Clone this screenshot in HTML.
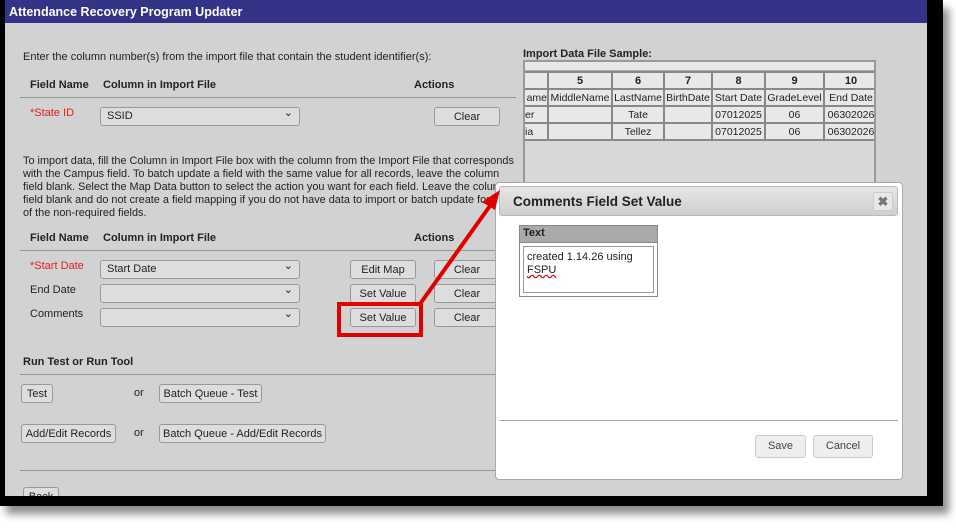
<!DOCTYPE html>
<html><head><style>
*{margin:0;padding:0;box-sizing:border-box}
body{width:956px;height:530px;background:#fff;position:relative;overflow:hidden;font-family:"Liberation Sans",Arial,sans-serif;font-size:11px;color:#222}
.a{position:absolute}
.frame{left:0;top:0;width:943px;height:506px;background:#000;box-shadow:6px 8px 8px rgba(0,0,0,.45)}
.page{left:5px;top:0;width:922px;height:496px;background:#d2d2d2;overflow:hidden}
.title{left:5px;top:0;width:922px;height:23px;background:#333388;color:#fff;font-weight:bold;font-size:12.5px;padding:5px 4px}
.b{font-weight:bold;font-size:11px}
.line{height:1px;background:#999}
.sel{height:19px;border:1px solid #999;border-radius:3px;background:#ddd;font-size:11px;padding:0 6px;line-height:17px}
.sel:after{content:"⌄";position:absolute;right:6px;top:-3px;font-size:11px}
.btn{height:19px;border:1px solid #999;border-radius:3px;background:#ddd;font-size:11px;text-align:center;line-height:18px}
.red{color:#e02020}
table{border-collapse:collapse;table-layout:fixed;width:354px}
td{border:2px solid #888;background:#e8e8e8;height:17px;text-align:center;font-size:10.5px;padding:0;white-space:nowrap;overflow:hidden}
</style></head><body>
<div class="a frame"></div>
<div class="a page"></div>
<div class="a title">Attendance Recovery Program Updater</div>

<div class="a" style="left:23px;top:51px">Enter the column number(s) from the import file that contain the student identifier(s):</div>
<div class="a b" style="left:30px;top:79px">Field Name</div>
<div class="a b" style="left:103px;top:79px">Column in Import File</div>
<div class="a b" style="left:414px;top:79px">Actions</div>
<div class="a line" style="left:20px;top:97px;width:496px"></div>
<div class="a red" style="left:30px;top:107px">*State ID</div>
<div class="a sel" style="left:100px;top:107px;width:200px">SSID</div>
<div class="a btn" style="left:434px;top:107px;width:66px">Clear</div>

<div class="a" style="left:23px;top:155px;width:497px;line-height:13px;font-size:10.9px">To import data, fill the Column in Import File box with the column from the Import File that corresponds with the Campus field. To batch update a field with the same value for all records, leave the column field blank. Select the Map Data button to select the action you want for each field. Leave the column field blank and do not create a field mapping if you do not have data to import or batch update for any of the non-required fields.</div>

<div class="a b" style="left:30px;top:232px">Field Name</div>
<div class="a b" style="left:103px;top:232px">Column in Import File</div>
<div class="a b" style="left:414px;top:232px">Actions</div>
<div class="a line" style="left:20px;top:250px;width:480px"></div>
<div class="a red" style="left:30px;top:260px">*Start Date</div>
<div class="a sel" style="left:100px;top:260px;width:200px">Start Date</div>
<div class="a btn" style="left:350px;top:260px;width:66px">Edit Map</div>
<div class="a btn" style="left:434px;top:260px;width:66px">Clear</div>
<div class="a" style="left:30px;top:284px">End Date</div>
<div class="a sel" style="left:100px;top:284px;width:200px"></div>
<div class="a btn" style="left:350px;top:284px;width:66px">Set Value</div>
<div class="a btn" style="left:434px;top:284px;width:66px">Clear</div>
<div class="a" style="left:30px;top:308px">Comments</div>
<div class="a sel" style="left:100px;top:308px;width:200px"></div>
<div class="a btn" style="left:350px;top:308px;width:66px">Set Value</div>
<div class="a btn" style="left:434px;top:308px;width:66px">Clear</div>
<div class="a" style="left:337px;top:302px;width:86px;height:35px;border:4px solid #e00000"></div>

<div class="a b" style="left:23px;top:356px">Run Test or Run Tool</div>
<div class="a line" style="left:20px;top:374px;width:480px"></div>
<div class="a btn" style="left:21px;top:384px;width:32px">Test</div>
<div class="a" style="left:134px;top:387px">or</div>
<div class="a btn" style="left:159px;top:384px;width:103px">Batch Queue - Test</div>
<div class="a btn" style="left:21px;top:424px;width:95px">Add/Edit Records</div>
<div class="a" style="left:134px;top:427px">or</div>
<div class="a btn" style="left:159px;top:424px;width:167px">Batch Queue - Add/Edit Records</div>
<div class="a line" style="left:20px;top:470px;width:480px"></div>
<div class="a btn" style="left:23px;top:487px;width:36px;height:19px">Back</div>
<div class="a" style="left:0;top:496px;width:943px;height:10px;background:#000"></div>

<div class="a b" style="left:523px;top:48px">Import Data File Sample:</div>
<div class="a" style="left:523px;top:60px;width:353px;height:125px;border:2px solid #999;background:#d8d8d8;overflow:hidden">
<div style="height:9px;background:#e8e8e8;border-bottom:1px solid #aaa"></div>
<table style="margin-left:-2px">
<colgroup><col style="width:24px"><col style="width:64px"><col style="width:52px"><col style="width:48px"><col style="width:53px"><col style="width:59px"><col style="width:54px"></colgroup>
<tr><td></td><td class="b">5</td><td class="b">6</td><td class="b">7</td><td class="b">8</td><td class="b">9</td><td class="b">10</td></tr>
<tr><td style="text-align:right">ame</td><td>MiddleName</td><td>LastName</td><td>BirthDate</td><td>Start Date</td><td>GradeLevel</td><td>End Date</td></tr>
<tr><td style="text-align:left">er</td><td></td><td>Tate</td><td></td><td>07012025</td><td>06</td><td>06302026</td></tr>
<tr><td style="text-align:left">ia</td><td></td><td>Tellez</td><td></td><td>07012025</td><td>06</td><td>06302026</td></tr>
</table></div>

<div class="a" style="left:495px;top:182px;width:408px;height:298px;background:#fff;border:1px solid #aaa;border-radius:4px"></div>
<div class="a" style="left:499px;top:186px;width:399px;height:30px;background:linear-gradient(#e6e6e6,#cfcfcf);border:1px solid #bbb;border-radius:3px;font-weight:bold;font-size:13.5px;padding:7px 13px;color:#222">Comments Field Set Value</div>
<div class="a" style="left:873px;top:192px;width:20px;height:19px;background:#e8e8e8;border:1px solid #ccc;border-radius:2px;color:#777;font-weight:bold;text-align:center;line-height:17px;font-size:13px">✖</div>
<div class="a" style="left:519px;top:225px;width:139px;height:72px;border:1px solid #888;background:#fff">
<div style="height:17px;background:#aaa;border-bottom:1px solid #888;font-weight:bold;padding:1px 3px;font-size:11px">Text</div>
<div style="margin:3px;height:47px;border:1px solid #999;padding:4px 3px;font-size:11px;line-height:13px">created 1.14.26 using<br><span style="text-decoration:underline wavy #c00">FSPU</span></div></div>
<div class="a" style="left:499px;top:420px;width:399px;height:1px;background:#aaa"></div>
<div class="a btn" style="left:755px;top:435px;width:51px;height:23px;line-height:21px;background:#eee;border-color:#ccc;color:#444">Save</div>
<div class="a btn" style="left:813px;top:435px;width:60px;height:23px;line-height:21px;background:#eee;border-color:#ccc;color:#444">Cancel</div>

<svg class="a" style="left:0;top:0" width="956" height="530"><line x1="420" y1="304" x2="492" y2="203" stroke="#e00000" stroke-width="4"/><polygon points="500,190 482,202 495,210" fill="#e00000"/></svg>
</body></html>
